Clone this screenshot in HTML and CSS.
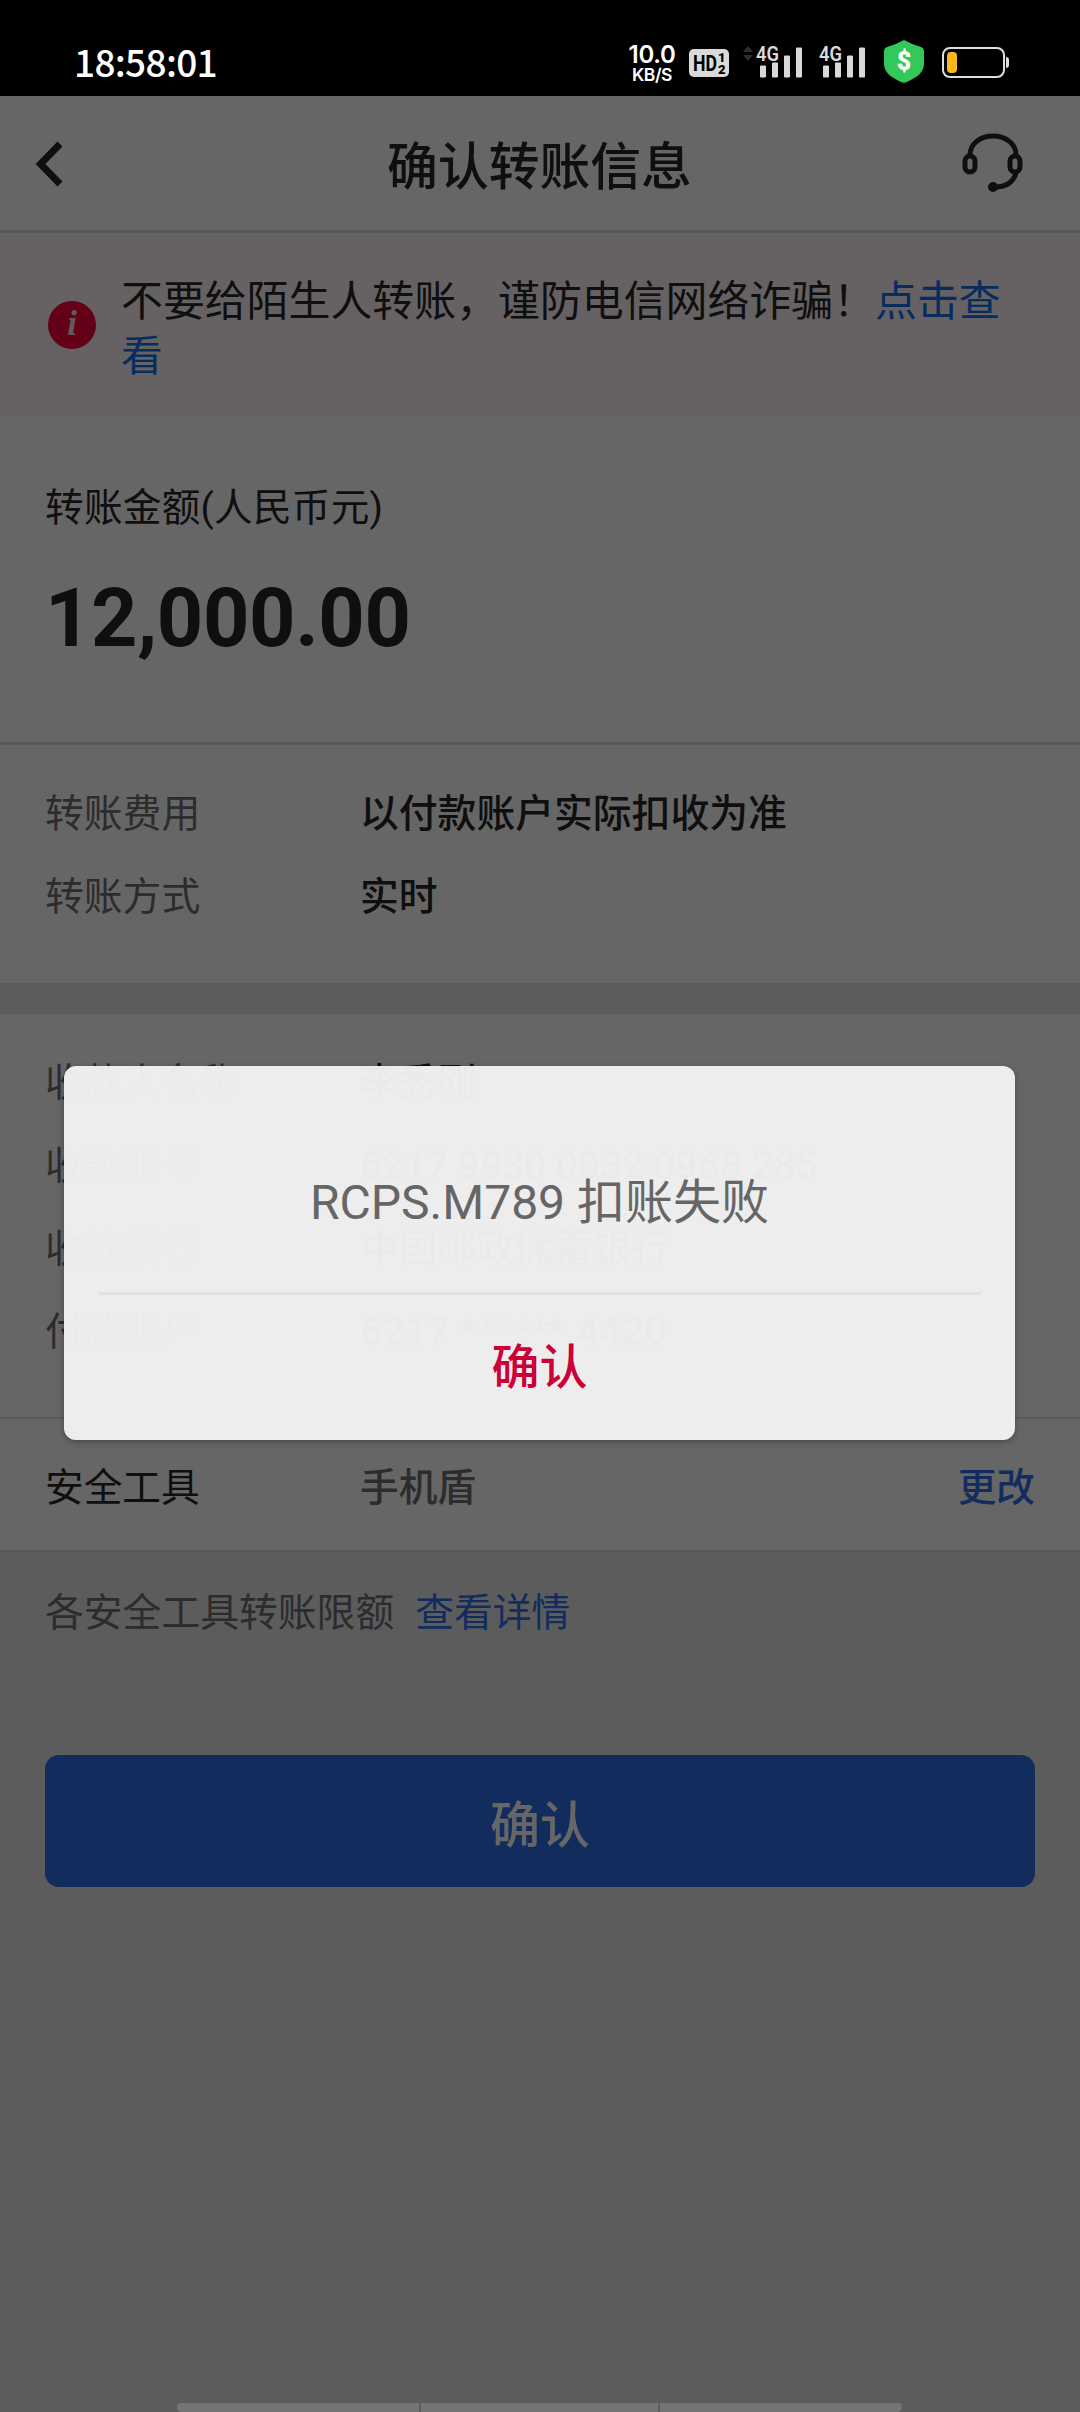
FILE: index.html
```html
<!DOCTYPE html>
<html lang="zh-CN">
<head>
<meta charset="utf-8">
<title>确认转账信息</title>
<link rel="stylesheet" href="styles.css">
</head>
<body>
<div class="screen">
  <header class="status">
    <span class="clock">18:58:01</span>
    <div class="status-icons">
      <div class="speed"><span class="speed-value">10.0</span><span class="speed-unit">KB/S</span></div>
      <svg class="hd" width="40" height="28" viewBox="0 0 40 28">
        <rect width="40" height="28" rx="5" fill="#d9d9d9"/>
        <text x="4" y="22" font-size="22" font-weight="700" textLength="24" lengthAdjust="spacingAndGlyphs">HD</text>
        <text x="29" y="13" font-size="13" font-weight="900">1</text>
        <text x="29" y="25" font-size="13" font-weight="900">2</text>
      </svg>
      <svg class="signal-one" width="60" height="34" viewBox="0 0 60 34">
        <path d="M0 8l5-6 5 6zM0 11h10l-5 6z" fill="#2e2e2e"/>
        <text x="13" y="17" font-size="21" font-weight="600" fill="#d9d9d9" textLength="23" lengthAdjust="spacingAndGlyphs">4G</text>
        <path d="M17.500 22h5v11h-5zM29.500 19h5v14h-5zM41.500 12h5v21h-5zM53.500 4h5v29h-5z" fill="#d9d9d9" stroke="#d9d9d9" stroke-linejoin="round"/>
      </svg>
      <svg class="signal-two" width="47" height="34" viewBox="13 0 47 34">
        <text x="13" y="17" font-size="21" font-weight="600" fill="#d9d9d9" textLength="23" lengthAdjust="spacingAndGlyphs">4G</text>
        <path d="M17.500 22h5v11h-5zM29.500 19h5v14h-5zM41.500 12h5v21h-5zM53.500 4h5v29h-5z" fill="#d9d9d9" stroke="#d9d9d9" stroke-linejoin="round"/>
      </svg>
      <svg class="shield" width="40" height="43" viewBox="0 0 40 43">
        <path d="M20 0Q29 5 37 7Q40 8 40 11V24C40 33 31 39 20 43C9 39 0 33 0 24V11Q0 8 3 7Q11 5 20 0z" fill="#34c759"/>
        <text x="20" y="30" font-size="25" font-weight="900" fill="#fff" text-anchor="middle">$</text>
      </svg>
      <svg class="battery" width="68" height="32" viewBox="0 0 68 32">
        <rect x="1" y="1" width="61" height="29" rx="7" fill="none" stroke="#dedede" stroke-width="2"/>
        <rect x="5" y="5" width="10" height="21" rx="4" fill="#ffb915"/>
        <path d="M64 10q3 0 3 3v5q0 3-3 3z" fill="#dedede"/>
      </svg>
    </div>
  </header>

  <main class="app">
    <div class="titlebar">
      <svg class="back" width="32" height="50" viewBox="0 0 32 50"><path d="M26 5L6.500 25L26 45" fill="none" stroke="#262626" stroke-width="7"/></svg>
      <h1>确认转账信息</h1>
      <svg class="support" width="62" height="60" viewBox="0 0 62 60" fill="none" stroke="#262626" stroke-width="5">
        <path d="M8 22C8 11 18 3 31 3S54 11 54 22"/>
        <rect x="3" y="23" width="10" height="16" rx="5"/>
        <rect x="48" y="23" width="10" height="16" rx="5"/>
        <path d="M54 40C51 50 44 54.500 31 54"/>
        <circle cx="31" cy="54" r="5" fill="#262626" stroke="none"/>
      </svg>
    </div>

    <div class="warning">
      <span class="info">i</span>
      <p>不要给陌生人转账，谨防电信网络诈骗！<a>点击查看</a></p>
    </div>

    <section class="amount">
      <div class="amount-label">转账金额(人民币元)</div>
      <div class="amount-value">12,000.00</div>
    </section>

    <section class="rows terms">
      <div class="row"><span>转账费用</span><b>以付款账户实际扣收为准</b></div>
      <div class="row"><span>转账方式</span><b>实时</b></div>
    </section>

    <section class="rows payee">
      <div class="row"><span>收款人名称</span><b>李秀刚</b></div>
      <div class="row"><span>收款账号</span><b>6217 9930 0032 0968 285</b></div>
      <div class="row"><span>收款银行</span><b>中国邮政储蓄银行</b></div>
      <div class="row"><span>付款账户</span><b class="masked">6217 ****** 4420</b></div>
    </section>

    <section class="tool">
      <span class="tool-name">安全工具</span><span class="tool-value">手机盾</span><a>更改</a>
    </section>

    <div class="limits"><span>各安全工具转账限额</span><a>查看详情</a></div>
    <button class="submit">确认</button>
  </main>

  <div class="scrim"></div>
  <div class="dialog">
    <p>RCPS.M789 扣账失败</p>
    <button>确认</button>
  </div>
  <div class="gesture"><i></i><i></i><i></i></div>
</div>
</body>
</html>
```
FILE: styles.css
```css
* { box-sizing: border-box; }

body {
  margin: 0;
  font-family: Roboto, "Noto Sans CJK SC", sans-serif;
  background: #5c5c5d;
}

h1, p { margin: 0; }
button { border: 0; padding: 0; font-family: inherit; }
svg { display: block; flex: none; }

.screen {
  position: relative;
  width: 1080px;
  height: 2412px;
  overflow: hidden;
  color: #262626;
}

/* Status bar */
.status {
  height: 96px;
  padding: 0 70px 0 74px;
  display: flex;
  justify-content: space-between;
  background: #000;
  color: #fff;
}
.clock {
  font: 500 37px/122px "Noto Sans CJK SC", sans-serif;
  letter-spacing: -0.700px;
}
.status-icons { display: flex; align-items: flex-start; }
.speed {
  width: 50px;
  padding-top: 43px;
  display: flex;
  flex-direction: column;
  align-items: center;
  font-family: Inter, sans-serif;
}
.speed-value { font-size: 24px; font-weight: 600; line-height: 24px; letter-spacing: -0.300px; }
.speed-unit { font-size: 17.5px; font-weight: 600; line-height: 16px; letter-spacing: -0.500px; }
.hd { margin: 49px 0 0 12px; }
.signal-one { margin: 44px 0 0 14px; }
.signal-two { margin: 44px 0 0 16px; }
.shield { margin: 40px 0 0 18px; }
.battery { margin: 47px 0 0 18px; }

/* Page */
.app { height: 2316px; background: #e6e6e9; }
.app a { color: #2d6eeb; }

.titlebar {
  height: 137px;
  padding: 0 56px 0 34px;
  display: flex;
  justify-content: space-between;
  background: #fff;
  border-bottom: 3px solid #e2e2e2;
}
.back { margin-top: 43px; }
.titlebar h1 {
  margin-left: 51px;
  font-size: 50.8px;
  font-weight: 500;
  line-height: 143px;
}
.support { margin-top: 37px; margin-left: 0; }

.warning {
  height: 184px;
  padding: 41px 60px 0 48px;
  display: flex;
  gap: 25px;
  height: 183px;
  background: #fff2f4;
}
.info {
  flex: none;
  width: 48px;
  height: 48px;
  margin-top: 27px;
  border-radius: 50%;
  background: #fa003c;
  color: #ffdbe3;
  font: italic 700 35px/46px "Liberation Serif", serif;
  text-align: center;
}
.warning p { font-size: 41.9px; line-height: 55px; }
.warning a { color: #1272ea; }

.amount {
  height: 329px;
  padding: 66px 45px 0;
  background: #fff;
  border-bottom: 3px solid #e0e0e0;
}
.amount-label { font-size: 38.7px; line-height: 52px; letter-spacing: 0.200px; }
.amount-value {
  margin-top: 37px;
  font-size: 81px;
  font-weight: 700;
  line-height: 96px;
  letter-spacing: -0.350px;
}

.rows { padding: 0 45px; background: #fff; }
.row {
  display: flex;
  height: 83px;
  font-size: 38.8px;
  line-height: 83px;
}
.row span { width: 315px; color: #6e6e6e; }
.row b { font-weight: 500; }
.row .masked { letter-spacing: 0.500px; }
.terms { height: 238px; padding-top: 27px; }
.payee {
  height: 405px;
  margin-top: 31px;
  padding-top: 27px;
  border-bottom: 2px solid #e0e0e0;
}

.tool {
  display: flex;
  height: 133px;
  padding: 0 45px;
  background: #fff;
  border-bottom: 2px solid #dcdcde;
  font-size: 38.7px;
  line-height: 138px;
}
.tool-name { width: 315px; }
.tool-value { flex: 1; color: #6e6e6e; font-weight: 500; }
.tool a { font-weight: 500; }

.limits {
  display: flex;
  gap: 21px;
  padding: 33px 45px 0;
  color: #6e6e6e;
  font-size: 38.8px;
  line-height: 56px;
}
.submit {
  display: block;
  width: 990px;
  height: 132px;
  margin: 114px auto 0;
  padding-top: 4px;
  border-radius: 14px;
  background: #2d6eeb;
  color: #fff;
  font-size: 50px;
  font-weight: 500;
  line-height: 134px;
}

/* Modal layer */
.scrim {
  position: absolute;
  inset: 96px 0 0;
  background: rgba(0, 0, 0, 0.6);
}
.dialog {
  position: absolute;
  left: 64px;
  top: 1066px;
  width: 951px;
  height: 374px;
  padding: 0 34px;
  border-radius: 12px;
  background: rgba(243, 243, 243, 0.965);
  box-shadow: 0 2px 6px rgba(0, 0, 0, 0.3);
  text-align: center;
}
.dialog p {
  height: 229px;
  padding-top: 103px;
  border-bottom: 3px solid #e2e2e2;
  color: #666;
  font-size: 48px;
  line-height: 68px;
}
.dialog button {
  width: 100%;
  height: 140px;
  padding-top: 3px;
  background: none;
  color: #cb0137;
  font-size: 48px;
  font-weight: 500;
  line-height: 140px;
}

.gesture {
  position: absolute;
  left: 177px;
  bottom: 0;
  width: 725px;
  height: 9px;
  display: grid;
  grid-template-columns: 242px 237px 1fr;
  gap: 2px;
  border-radius: 5px;
  overflow: hidden;
}
.gesture i { background: #747474; }
```
